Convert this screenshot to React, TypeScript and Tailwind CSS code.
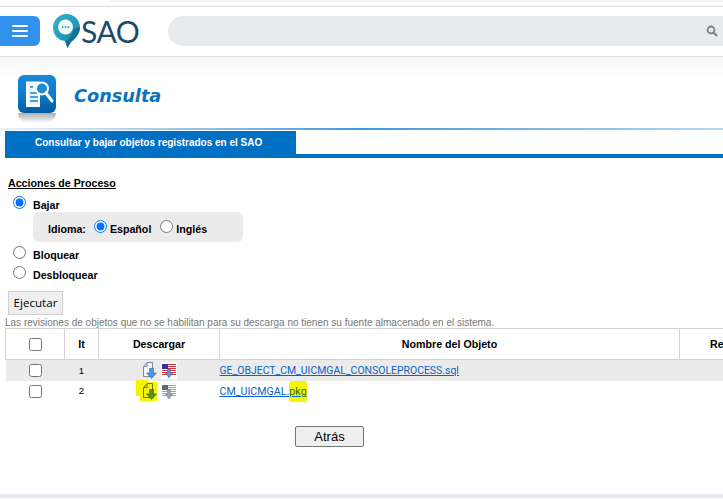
import React from "react";

const sans = { fontFamily: '"Liberation Sans", Arial, sans-serif' };
const tahoma = { fontFamily: 'Roboto, "Liberation Sans", sans-serif' };

function DocIcon({ tint }: { tint: "blue" | "green" }) {
  const a = tint === "blue" ? "#4a97e4" : "#5f8f10";
  const d = tint === "blue" ? "#2a6cbc" : "#3f6a08";
  const page = tint === "blue" ? "#f2f6fb" : "#f2f20c";
  const line = tint === "blue" ? "#7a899c" : "#6a7414";
  return (
    <svg width="15" height="17" viewBox="0 0 15 17">
      <path d="M1.5 4.5 L5 0.5 H10.5 V14.5 H1.5 Z" fill={page} stroke={line} strokeWidth="1" />
      <path d="M1.5 4.5 H5 V0.5" fill="none" stroke={line} strokeWidth="1" />
      <path d="M7.5 6.5 H11.5 V11 H14.5 L9.5 16.5 L4.5 11 H7.5 Z" fill={a} stroke={d} strokeWidth="0.6" />
    </svg>
  );
}

function FlagIcon({ grey }: { grey?: boolean }) {
  const red = grey ? "#a2a2a2" : "#e0303a";
  const navy = grey ? "#666666" : "#2c32a0";
  const a = grey ? "#98a3b3" : "#4a97e4";
  const d = grey ? "#6f7a88" : "#2a6cbc";
  const stripes = [2, 4, 6, 8, 10, 12];
  return (
    <svg width="16" height="17" viewBox="0 0 16 17" className={grey ? "" : "bg-white"}>
      <rect x="1" y="2" width="14" height="11" fill="#ffffff" />
      {stripes.map((y) => (
        <rect key={y} x="1" y={y} width="14" height="1" fill={red} />
      ))}
      <rect x="1" y="2" width="6" height="5" fill={navy} />
      <path d="M6.5 7 H9.5 V11 H11.5 L8 16 L4.5 11 H6.5 Z" fill={a} stroke={d} strokeWidth="0.5" />
    </svg>
  );
}

function Logo() {
  return (
    <svg width="30" height="36" viewBox="0 0 30 36">
      <defs>
        <linearGradient id="lg" x1="0" y1="0" x2="1" y2="1">
          <stop offset="0" stopColor="#2bb9d2" />
          <stop offset="1" stopColor="#1d7f9f" />
        </linearGradient>
      </defs>
      <path d="M14.5 1 A13.5 13.5 0 0 1 28 14.5 C28 22 22 27 19 29 L15.5 35 L13 28 C6 27.5 1 21.5 1 14.5 A13.5 13.5 0 0 1 14.5 1 Z" fill="url(#lg)" />
      <path d="M21 16 L28 14 C27.5 21 22.5 26 19 29 L15.5 35 L13 28 C18 27 20.5 22 21 16 Z" fill="#1c6f93" />
      <circle cx="13.5" cy="14" r="7.5" fill="#f4fbfc" />
      <circle cx="10.5" cy="14" r="1" fill="#2aa9c6" />
      <circle cx="13.5" cy="14" r="1" fill="#2aa9c6" />
      <circle cx="16.5" cy="14" r="1" fill="#2aa9c6" />
    </svg>
  );
}

function ConsultaIcon() {
  return (
    <div className="relative h-[38px] w-[38px]">
      <div className="absolute left-0 top-[38px] h-[10px] w-[38px] rounded-b-full bg-gradient-to-b from-[#9a9a9a] to-white opacity-80" />
      <div className="h-[38px] w-[38px] rounded-[6px] bg-gradient-to-b from-[#1a88da] via-[#0f7ccc] to-[#035a9e]">
        <svg width="38" height="38" viewBox="0 0 38 38">
          <path d="M9 7.5 H21 V31 H9 Z" fill="#e9f4fb" stroke="#fff" strokeWidth="2" />
          <path d="M12 18 H20 M12 22 H20 M12 26 H20 M12 12 H15" stroke="#1c86cc" strokeWidth="1.4" />
          <circle cx="24" cy="13.5" r="6" fill="#1e8ad6" stroke="#fff" strokeWidth="2" />
          <path d="M28 18 L34 26" stroke="#fff" strokeWidth="3" strokeLinecap="round" />
        </svg>
      </div>
    </div>
  );
}

function SearchGlyph() {
  return (
    <svg width="12" height="12" viewBox="0 0 12 12" fill="none" stroke="#808080">
      <circle cx="5" cy="5" r="3.5" strokeWidth="1.8" />
      <path d="M7.8 7.8 L11 11" strokeWidth="2.2" />
    </svg>
  );
}

export default function App() {
  return (
    <div className="h-[499px] w-[723px] overflow-hidden bg-white text-[10.67px] text-black" style={sans}>
      <div className="flex h-[7px] items-start justify-end border-b border-[#dcdcdc]">
        <div className="h-[2px] w-[613px] bg-[#f3f3f3]" />
      </div>
      <header className="flex h-[50px] items-center border-b border-[#dedede] pb-[1px]">
        <button className="flex h-[30px] w-[40px] items-center justify-center rounded-r-[6px] bg-[#3391ee]">
          <span className="flex w-[16px] flex-col gap-[3px]">
            <span className="h-[2px] rounded-sm bg-white" />
            <span className="h-[2px] rounded-sm bg-white" />
            <span className="h-[2px] rounded-sm bg-white" />
          </span>
        </button>
        <div className="ml-[12px] flex w-[116px] items-center">
          <Logo />
          <span className="ml-[-1px] text-[30px] leading-none tracking-[-0.5px] text-[#1d4a69]" style={{ fontFamily: "Lato, sans-serif" }}>
            SAO
          </span>
        </div>
        <div className="flex h-[30px] flex-1 items-center justify-end rounded-l-full rounded-r-[10px] bg-[#e8eaed] pr-[5px]">
          <SearchGlyph />
        </div>
      </header>

      <div className="h-[71px] bg-gradient-to-b from-[#f6f7f7] to-white to-[35%]">
        <div className="flex items-center pl-[18px] pt-[18px]">
          <ConsultaIcon />
          <h1 className="ml-[18px] mt-[5px] text-[17.7px] font-bold italic leading-none text-[#0b72bd]" style={{ fontFamily: '"DejaVu Sans", Verdana, sans-serif' }}>
            Consulta
          </h1>
        </div>
      </div>
      <div className="h-[2px] bg-gradient-to-r from-[#eaf3fb] via-[#3f97dd] to-[#b5d8f3]" />

      <div className="pl-[5px] pt-[1px]">
        <div className="flex h-[27px] border-b-[4px] border-[#0070c5]">
          <div className="flex h-[23px] w-[291px] items-center bg-[#0070c5] pl-[30px] text-[10px] font-bold whitespace-nowrap text-white">
            Consultar y bajar objetos registrados en el SAO
          </div>
        </div>
      </div>

      <div className="pl-[8px] pt-[19px] font-bold">
        <div className="leading-[13px] underline">Acciones de Proceso</div>
        <label className="ml-[5px] mt-[5px] flex h-[15px] items-center gap-[7px]">
          <input type="radio" name="a" defaultChecked className="m-0" />
          <span className="pt-[5px]">Bajar</span>
        </label>
        <div className="ml-[25px] mt-[2px] flex h-[30px] w-[210px] items-center rounded-[6px] bg-[#ebebeb] pl-[15px]">
          <span className="pt-[4px]">Idioma:</span>
          <input type="radio" name="l" defaultChecked className="mb-[2px] ml-[8px] mr-[3px]" />
          <span className="pt-[4px]">Español</span>
          <input type="radio" name="l" className="mb-[2px] ml-[9px] mr-[3px]" />
          <span className="pt-[4px]">Inglés</span>
        </div>
        <label className="ml-[5px] mt-[3px] flex h-[15px] items-center gap-[7px]">
          <input type="radio" name="a" className="m-0" />
          <span className="pt-[5px]">Bloquear</span>
        </label>
        <label className="ml-[5px] mt-[5px] flex h-[15px] items-center gap-[7px]">
          <input type="radio" name="a" className="m-0" />
          <span className="pt-[5px]">Desbloquear</span>
        </label>
      </div>

      <div className="pl-[8px] pt-[11px]">
        <button className="h-[24px] w-[55px] border border-[#d0d0d0] bg-[#efefef] text-[11.6px] text-black" style={{ fontFamily: '"Open Sans", sans-serif' }}>
          Ejecutar
        </button>
      </div>
      <p className="pl-[5px] pt-[2px] text-[10px] leading-[11px] text-[#777]">
        Las revisiones de objetos que no se habilitan para su descarga no tienen su fuente almacenado en el sistema.
      </p>

      <table className="ml-[5px] table-fixed border-collapse" style={{ width: 718 }}>
        <colgroup>
          <col className="w-[59px]" />
          <col className="w-[34px]" />
          <col className="w-[121px]" />
          <col className="w-[460px]" />
          <col />
        </colgroup>
        <thead>
          <tr className="h-[31px] border-y border-[#d4d4d4]">
            <th className="border-x border-[#d4d4d4] font-bold">
              <input type="checkbox" className="mx-auto m-0 block" />
            </th>
            <th className="border-x border-[#d4d4d4] font-bold">It</th>
            <th className="border-x border-[#d4d4d4] font-bold">Descargar</th>
            <th className="border-x border-[#d4d4d4] font-bold">Nombre del Objeto</th>
            <th className="whitespace-nowrap border-l border-[#d4d4d4] pl-[30px] text-left font-bold">Re</th>
          </tr>
        </thead>
        <tbody>
          <tr className="h-[21px] bg-[#ebebeb]">
            <td className="pt-[1px]"><input type="checkbox" className="mx-auto m-0 block" /></td>
            <td className="pt-[1px] text-center text-[9.5px]">1</td>
            <td>
              <div className="flex items-center justify-center gap-[4px]">
                <DocIcon tint="blue" />
                <FlagIcon />
              </div>
            </td>
            <td className="pt-[1px]"><a className="text-[10.45px] text-[#0b63c5] underline" style={tahoma}>GE_OBJECT_CM_UICMGAL_CONSOLEPROCESS.sql</a></td>
            <td />
          </tr>
          <tr className="h-[21px]">
            <td className="pt-[1px]"><input type="checkbox" className="mx-auto m-0 block" /></td>
            <td className="pt-[1px] text-center text-[9.5px]">2</td>
            <td>
              <div className="flex items-center justify-center gap-[4px]">
                <div className="relative">
                  <div className="absolute left-[-6px] top-[-3px] h-[16px] w-[12px] bg-[#f5f500]" />
                  <div className="absolute left-[-2px] top-[-1px] h-[19px] w-[17px] bg-[#f5f500]" />
                  <div className="relative"><DocIcon tint="green" /></div>
                </div>
                <FlagIcon grey />
              </div>
            </td>
            <td className="pt-[1px]">
              <a className="text-[10.67px] text-[#0b63c5] underline" style={tahoma}>
                CM_UICMGAL.
                <span className="rounded-[3px] bg-[#f5f500] py-[4px] text-[#2f6a20]">pkg</span>
              </a>
            </td>
            <td />
          </tr>
        </tbody>
      </table>

      <div className="pl-[295px] pt-[24px]">
        <button className="h-[21px] w-[69px] rounded-[2px] border border-[#767676] bg-[#efefef] text-[13px]" style={sans}>
          Atrás
        </button>
      </div>
      <div className="mt-[47px] h-[4px] bg-[#e3ebf6]" />
    </div>
  );
}
